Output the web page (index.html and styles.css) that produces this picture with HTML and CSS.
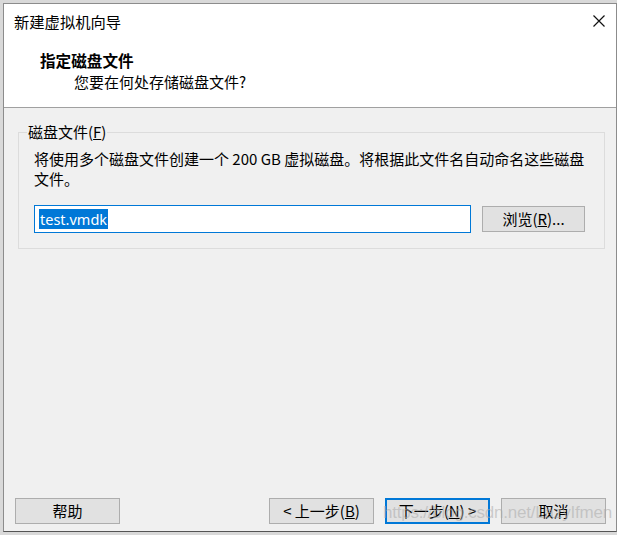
FILE: index.html
```html
<!DOCTYPE html>
<html lang="zh-CN">
<head>
<meta charset="utf-8">
<title>新建虚拟机向导</title>
<link rel="stylesheet" href="styles.css">
</head>
<body>
<div class="window">
  <div class="titlebar">
    <span class="title">新建虚拟机向导</span>
    <svg class="close" width="12" height="12" viewBox="0 0 12 12"><path d="M0.5 0.5 L11.5 11.5 M11.5 0.5 L0.5 11.5" stroke="#111" stroke-width="1.2" fill="none"/></svg>
  </div>
  <div class="header">
    <div class="heading">指定磁盘文件</div>
    <div class="subheading">您要在何处存储磁盘文件?</div>
  </div>
  <div class="body">
    <fieldset class="group">
      <legend class="group-label">磁盘文件(<u>F</u>)</legend>
      <p class="desc">将使用多个磁盘文件创建一个 200 GB 虚拟磁盘。将根据此文件名自动命名这些磁盘文件。</p>
      <div class="file-row">
        <div class="input"><span class="sel">test.vmdk</span></div>
        <div class="btn browse">浏览(<u>R</u>)...</div>
      </div>
    </fieldset>
    <div class="footer">
      <div class="btn">帮助</div>
      <div class="spacer"></div>
      <div class="btn">&lt; 上一步(<u>B</u>)</div>
      <div class="btn default">下一步(<u>N</u>) &gt;</div>
      <div class="btn">取消</div>
    </div>
    <div class="watermark">https://blog.csdn.net/LazyIfmen</div>
  </div>
</div>
</body>
</html>
```
FILE: styles.css
```css
html, body {
  margin: 0;
  padding: 0;
}
body {
  width: 617px;
  height: 535px;
  overflow: hidden;
  background: #d9d9d9;
  font-family: "Noto Sans CJK SC", "Microsoft YaHei", sans-serif;
  font-size: 15px;
  color: #000;
}
.window {
  margin: 3px 0 0 3px;
  width: 612px;
  height: 527px;
  border: 1px solid #8c8c8c;
  border-bottom-color: #555;
  display: flex;
  flex-direction: column;
  background: #f0f0f0;
  position: relative;
}
.titlebar {
  height: 33px;
  background: #fff;
  display: flex;
  align-items: center;
  justify-content: space-between;
  padding: 0 11px 0 10px;
}
.title {
  line-height: 20px;
  font-size: 15.3px;
}
.close {
  display: block;
}
.header {
  background: #fff;
  border-bottom: 1px solid #a0a0a0;
  padding-top: 13px;
  box-sizing: border-box;
  height: 71px;
}
.heading {
  font-weight: bold;
  font-size: 15.6px;
  line-height: 20px;
  padding-left: 36px;
}
.subheading {
  line-height: 20px;
  margin-top: 2px;
  padding-left: 70px;
}
.body {
  flex: 1;
  display: flex;
  flex-direction: column;
  position: relative;
}
.group {
  margin: 14px 11px 0 14px;
  padding: 0 15px 15px 15px;
  border: 1px solid #dcdcdc;
  min-width: 0;
}
.group-label {
  padding: 0 1px;
  margin-left: -7px;
  line-height: 20px;
}
.desc {
  margin: 7px 0 0 0;
  line-height: 20px;
  width: 558px;
}
.file-row {
  display: flex;
  align-items: center;
  gap: 11px;
  margin-top: 16px;
}
.input {
  height: 26px;
  border: 1px solid #0078d7;
  background: #fff;
  display: flex;
  align-items: center;
  padding-left: 4px;
  box-sizing: content-box;
  width: 431px;
}
.sel {
  background: #0078d7;
  color: #fff;
  font-family: "Noto Sans", "Segoe UI", sans-serif;
  font-size: 14.5px;
  line-height: 20px;
  padding: 0 1px;
}
.btn {
  width: 103px;
  height: 24px;
  border: 1px solid #adadad;
  background: #e1e1e1;
  display: flex;
  align-items: center;
  justify-content: center;
  line-height: 20px;
  box-sizing: content-box;
}
.browse {
  width: 101px;
}
.footer {
  margin-top: auto;
  display: flex;
  align-items: center;
  gap: 11px;
  padding: 0 10px 7px 11px;
}
.spacer {
  flex: 1;
}
.default {
  border-color: #0078d7;
  box-shadow: inset 0 0 0 1px #0078d7;
}
.watermark {
  position: absolute;
  right: 4px;
  bottom: 8px;
  font-family: "Liberation Sans", Arial, sans-serif;
  font-size: 17px;
  color: rgba(170, 170, 170, 0.55);
  pointer-events: none;
  letter-spacing: -0.2px;
}
```
